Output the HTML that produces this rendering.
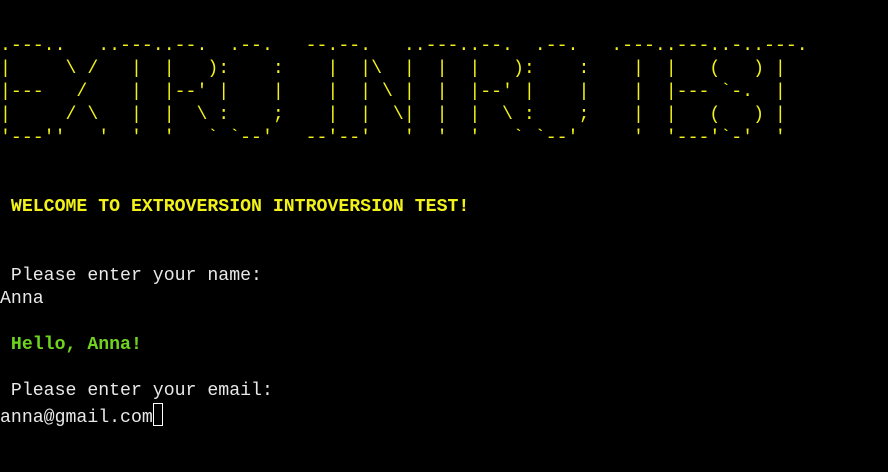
<!DOCTYPE html>
<html><head><meta charset="utf-8"><style>
html,body{margin:0;padding:0;background:#000;width:888px;height:472px;overflow:hidden}
pre{position:absolute;left:0;top:35px;margin:0;font-family:"Courier New","Liberation Mono",monospace;font-size:18.2px;line-height:23px;color:#e8e8e8;white-space:pre}
.y{color:#f2f21a}
.b{font-weight:bold}
.g{color:#6fd420}
.c{display:inline-block;width:8px;height:21px;border:1px solid #fff;vertical-align:-4px;margin-left:0}
</style></head><body>
<pre><span class="y">.---..   ..---..--.  .--.   --.--.   ..---..--.  .--.   .---..---..-..---.
|     \ /   |  |   ):    :    |  |\  |  |  |   ):    :    |  |   (   ) |
|---   /    |  |--' |    |    |  | \ |  |  |--' |    |    |  |--- `-.  |
|     / \   |  |  \ :    ;    |  |  \|  |  |  \ :    ;    |  |   (   ) |
'---''   '  '  '   ` `--'   --'--'   '  '  '   ` `--'     '  '---'`-'  '</span>


<span class="y b"> WELCOME TO EXTROVERSION INTROVERSION TEST!</span>


 Please enter your name:
Anna

<span class="g b"> Hello, Anna!</span>

 Please enter your email:
anna@gmail.com<span class="c"></span></pre>
</body></html>
